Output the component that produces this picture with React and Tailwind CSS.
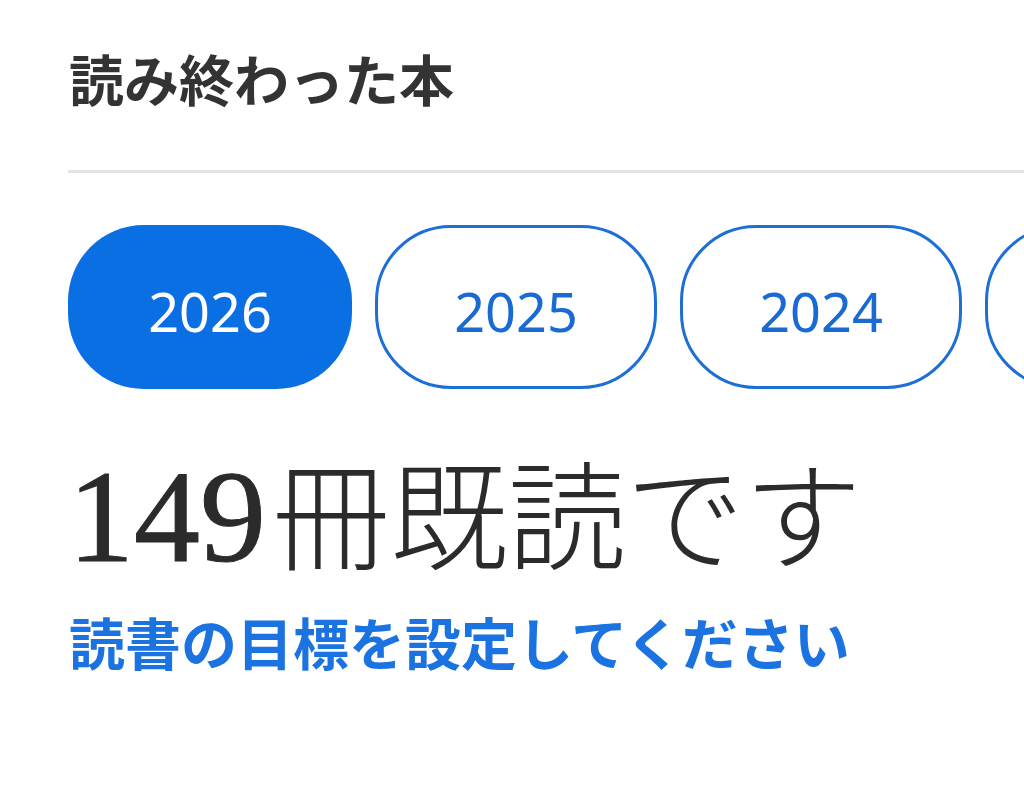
import React, { useState } from "react";

const years = ["2026", "2025", "2024", "2023"];

function App() {
  const [year, setYear] = useState("2026");

  return (
    <div
      className="w-[1024px] h-[801px] overflow-hidden bg-white"
      style={{ fontFamily: '"Noto Sans", "Noto Sans CJK JP", sans-serif' }}
    >
      <div className="pl-[68px] pt-[44px]">
        <h1 className="text-[55px] leading-[72px] font-semibold text-[#333333] pl-[1px]">
          読み終わった本
        </h1>

        <div className="mt-[54px] h-[3px] bg-[#e3e3e3]" />

        <div className="mt-[52px] flex gap-[23px] overflow-hidden">
          {years.map((y) => (
            <button
              key={y}
              onClick={() => setYear(y)}
              className={
                y === year
                  ? "shrink-0 w-[284px] h-[164px] rounded-[76px] bg-[#0b6fe4] text-white text-[54px] pt-[8px]"
                  : "shrink-0 w-[282px] h-[164px] rounded-[76px] border-[3px] border-[#1d6fd6] bg-white text-[#1a6ad4] text-[54px] pt-[8px]"
              }
            >
              {y}
            </button>
          ))}
        </div>

        <div className="mt-[58px] h-[140px] flex items-baseline text-[#2b2b2b] whitespace-nowrap">
          <span
            className="text-[132px] leading-[140px] [-webkit-text-stroke:1px_#2b2b2b]"
            style={{ fontFamily: '"Liberation Serif", "Times New Roman", serif' }}
          >
            149
          </span>
          <span
            className="text-[118px] leading-[140px] font-light pl-[6px]"
            style={{ fontFamily: '"Liberation Serif", "Noto Sans CJK JP", serif' }}
          >
            冊既読です
          </span>
        </div>

        <div className="mt-[20px] text-[56px] leading-[72px] font-bold text-[#1a73e0] pl-[1px]">
          読書の目標を設定してください
        </div>
      </div>
    </div>
  );
}

export default App;
